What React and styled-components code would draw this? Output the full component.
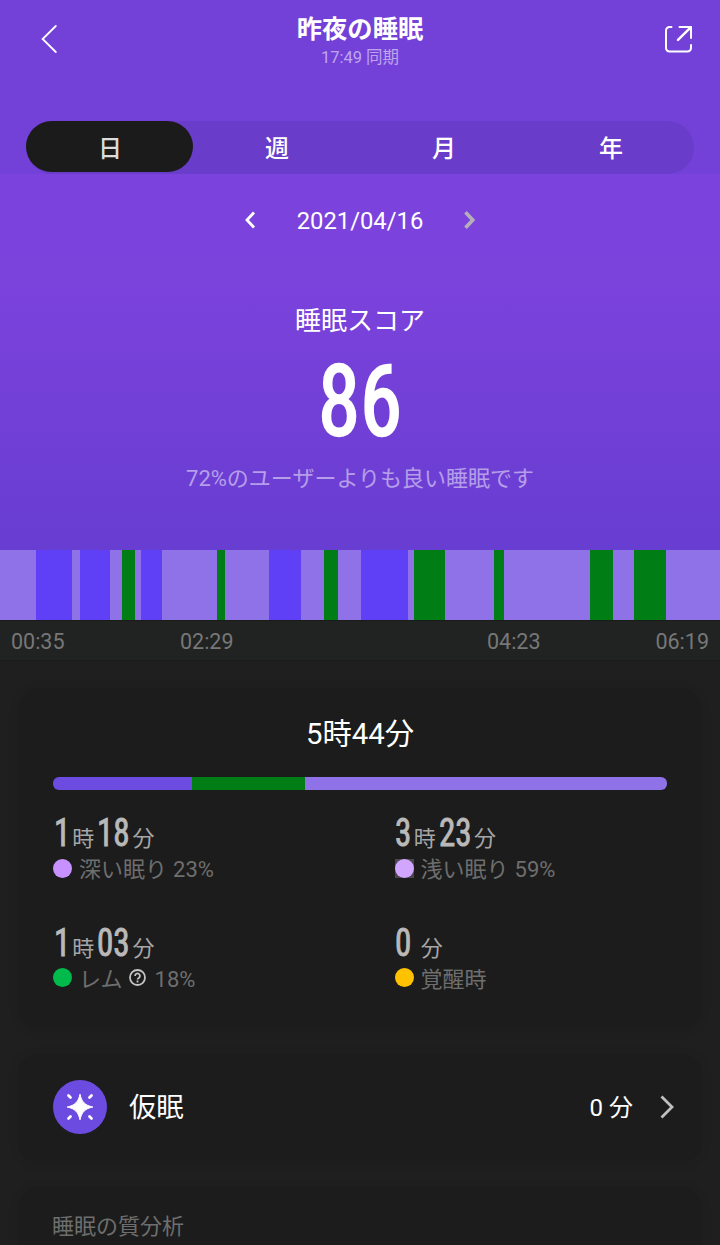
import React, { Component } from 'react'
import styled, { createGlobalStyle } from 'styled-components'

const GlobalStyle = createGlobalStyle`
    * {
        box-sizing: border-box;
    }

    body {
        margin: 0;
        background: #1f1f1f;
        font-family: Roboto, 'Noto Sans CJK JP', sans-serif;
        color: #fff;
    }
`

const Screen = styled.main`
    display: flex;
    flex-direction: column;
    width: 720px;
    height: 1245px;
    overflow: hidden;
    background: #1f1f1f;
`

const Top = styled.header`
    flex: none;
    height: 174px;
    padding: 0 26px;
    background: #7341d8;
`

const TitleBar = styled.div`
    display: grid;
    grid-template-columns: 48px 1fr 48px;
    height: 121px;
    padding: 11px 0 0;
`

const IconButton = styled.button`
    display: flex;
    align-items: center;
    justify-content: ${props => props.$end ? 'flex-end' : 'center'};
    width: 48px;
    height: 56px;
    padding: 0;
    border: 0;
    background: none;
    color: #fff;
`

const Heading = styled.div`
    text-align: center;
`

const Title = styled.h1`
    margin: 0;
    padding-top: 2px;
    font-size: 25.3px;
    font-weight: 700;
    line-height: 34px;
`

const Synced = styled.p`
    margin: 0;
    font-size: 16.5px;
    line-height: 22px;
    color: rgba(255, 255, 255, 0.55);
`

const Tabs = styled.nav`
    display: flex;
    height: 53px;
    border-radius: 27px;
    background: #6a3cca;
`

const Tab = styled.button`
    flex: 1;
    height: 51px;
    padding: 2px 0 0 1px;
    border: 0;
    border-radius: 26px;
    font: 500 24px/49px Roboto, 'Noto Sans CJK JP', sans-serif;
    color: ${props => props.$active ? '#dcdcdc' : '#fff'};
    background: ${props => props.$active ? '#1b1b1b' : 'none'};

    span {
        display: block;
        padding-top: 2px;
    }
`

const Score = styled.section`
    display: flex;
    flex: none;
    flex-direction: column;
    align-items: center;
    height: 376px;
    padding-top: 30px;
    background: linear-gradient(#7c42dd 0, #7b42dc 30%, #683dd1 100%);
`

const DatePicker = styled.div`
    display: flex;
    align-items: center;
    gap: 38.5px;
    height: 34px;
    font-size: 23.8px;
    line-height: 34px;

    svg {
        margin-top: -2px;
    }
`

const ScoreLabel = styled.h2`
    margin: 63px 0 0;
    font-size: 26px;
    font-weight: 400;
    line-height: 40px;
`

// narrow numerals, the negative margin takes back the width lost by scaling
const Digits = styled.span`
    display: inline-block;
    font-family: 'Roboto Condensed', Roboto, sans-serif;
    font-stretch: 75%;
    -webkit-text-stroke: 0.024em currentColor;
    transform: scaleX(0.87);
    transform-origin: left;
    margin-right: ${props => props.$count * -0.064}em;
`

const ScoreValue = styled.div`
    margin-top: 11px;
    font-size: 98px;
    line-height: 100px;
`

const ScoreNote = styled.p`
    margin: 11px 0 0;
    font-size: 22px;
    line-height: 32px;
    color: rgba(255, 255, 255, 0.5);
`

const Timeline = styled.div`
    display: flex;
    flex: none;
    height: 70px;
`

const colors = {
    light: '#8f72e8',
    deep: '#5f40f7',
    rem: '#007d14',
    total: '#6c4be0'
}

const Segment = styled.div`
    flex: ${props => props.$size} 0 0;
    background: ${props => colors[props.$kind]};
`

const Axis = styled.div`
    display: grid;
    grid-template-columns: 169px 307px 1fr auto;
    flex: none;
    height: 41px;
    padding: 0 11px;
    border-top: 1px solid #1a1d17;
    border-bottom: 1px solid #1a1a1a;
    background: #212322;
    font-size: 21.5px;
    line-height: 41px;
    color: #777;
`

const Cards = styled.div`
    display: flex;
    flex-direction: column;
    gap: 26px;
    padding: 27px 19px 0;
`

const Card = styled.section`
    flex: none;
    padding: 0 34px;
    border-radius: 20px;
    background: #1c1c1c;
    box-shadow: 0 2px 12px rgba(0, 0, 0, 0.1);
`

const Summary = styled(Card)`
    height: 340px;
    padding-top: 25px;
`

const Total = styled.h3`
    margin: 0;
    font-size: 29.3px;
    font-weight: 400;
    line-height: 42px;
    text-align: center;
`

const Ratio = styled.div`
    display: flex;
    height: 13px;
    margin-top: 22px;
    border-radius: 6px;
    overflow: hidden;
`

const Stages = styled.div`
    display: grid;
    grid-template-columns: 341.5px 1fr;
    grid-auto-rows: 109.5px;
    padding-top: 21px;
`

const Duration = styled.div`
    height: 44px;
    padding-left: 0.5px;
    font-size: 38px;
    line-height: 44px;
    white-space: nowrap;
    color: #b9b9b9;
`

const Unit = styled.span`
    margin: 0 3px 0 ${props => props.$wide ? 9.5 : 2.5}px;
    font-size: 22px;
    color: #a6a6a6;
`

const StageName = styled.div`
    display: flex;
    align-items: center;
    height: 30px;
    font-size: 22px;
    line-height: 30px;
    color: #6e6e6e;
`

const Percent = styled.span`
    margin-left: ${props => props.$help ? 0 : 6}px;
`

const Dot = styled.span`
    width: 19px;
    height: 19px;
    margin: -4px 7px 0 0;
    background: ${props => props.$boxed ? '#4b454f' : 'none'};

    &::before {
        content: '';
        display: block;
        height: 19px;
        border-radius: 50%;
        background: ${props => props.$color};
    }
`

const HelpIcon = styled.svg`
    margin: -4px 9px 0 6px;
`

const NapCard = styled(Card)`
    display: flex;
    align-items: center;
    height: 107px;
    padding-right: 26px;
    padding-bottom: 2px;
`

const NapIcon = styled.svg`
    margin-right: 22px;
`

const NapName = styled.span`
    flex: 1;
    padding-top: 2px;
    font-size: 27.3px;
    line-height: 40px;
`

const NapValue = styled.span`
    margin-right: 26px;
    padding-bottom: 3px;
    font-size: 24px;
`

const Analysis = styled(Card)`
    height: 200px;
    padding: 24px 33px 0;
    font-size: 22px;
    line-height: 32px;
    color: #6e6e6e;
`

const timeline = [
    ['light', 36], ['deep', 35.5], ['light', 8.5], ['deep', 29.5], ['light', 12.5],
    ['rem', 12.5], ['light', 6.5], ['deep', 21], ['light', 55], ['rem', 8],
    ['light', 44], ['deep', 31.5], ['light', 23], ['rem', 14.5], ['light', 23.3],
    ['deep', 46.2], ['light', 6.2], ['rem', 31.3], ['light', 48.7], ['rem', 10.3],
    ['light', 86], ['rem', 23], ['light', 21], ['rem', 31.5], ['light', 54.5]
]

const ratio = [['total', 139], ['rem', 112.5], ['light', 362.5]]

const stages = [
    { name: '深い眠り', hours: '1', minutes: '18', percent: '23%', color: '#c792ff' },
    { name: '浅い眠り', hours: '3', minutes: '23', percent: '59%', color: '#d2a6ff', boxed: true },
    { name: 'レム', hours: '1', minutes: '03', percent: '18%', color: '#00ba4b', help: true },
    { name: '覚醒時', minutes: '0', color: '#ffc200' }
]

class App extends Component {

    state = { tab: '日' }

    renderSegments = (list) => list.map(([kind, size], i) => (
        <Segment key={i} $kind={kind} $size={size} />
    ))

    renderStage = (item) => (
        <div key={item.name}>
            <Duration>
                {item.hours && <Digits $count={1}>{item.hours}</Digits>}
                {item.hours && <Unit>時</Unit>}
                <Digits $count={item.minutes.length}>{item.minutes}</Digits>
                <Unit $wide={!item.hours}>分</Unit>
            </Duration>
            <StageName>
                <Dot $color={item.color} $boxed={item.boxed} />
                <span>{item.name}</span>
                {item.help && (
                    <HelpIcon width='17' height='17' viewBox='0 0 17 17' fill='none' stroke='#c4c4c4' strokeWidth='1.8'>
                        <circle cx='8.5' cy='8.5' r='7.5' />
                        <path d='M6.1 6.9a2.4 2.4 0 1 1 3.7 2c-.9.6-1.3.9-1.3 1.6M8.5 11.5v1.9' />
                    </HelpIcon>
                )}
                {item.percent && <Percent $help={item.help}>{item.percent}</Percent>}
            </StageName>
        </div>
    )

    render() {
        const { tab } = this.state
        return (
            <Screen>
                <GlobalStyle />
                <Top>
                    <TitleBar>
                        <IconButton aria-label='戻る'>
                            <svg width='18' height='30' viewBox='0 0 18 30' fill='none' stroke='currentColor' strokeWidth='1.8' strokeLinecap='round'>
                                <path d='M14.8 2L1.6 15l13.2 13' />
                            </svg>
                        </IconButton>
                        <Heading>
                            <Title>昨夜の睡眠</Title>
                            <Synced>17:49 同期</Synced>
                        </Heading>
                        <IconButton $end aria-label='共有'>
                            <svg width='30' height='30' viewBox='0 0 30 30' fill='none' stroke='currentColor' strokeWidth='2' strokeLinecap='round'>
                                <path d='M7.5 3H5.5A3.500 3.500 0 0 0 2 6.500v17.500a3.500 3.500 0 0 0 3.500 3.500h18a3.500 3.500 0 0 0 3.500-3.500v-3' />
                                <path d='M15.5 3H27v11' />
                                <path d='M26.2 3.8L14 15.8' strokeWidth='2.5' />
                            </svg>
                        </IconButton>
                    </TitleBar>
                    <Tabs>
                        {['日', '週', '月', '年'].map(name => (
                            <Tab key={name} $active={name === tab} onClick={() => this.setState({ tab: name })}>
                                <span>{name}</span>
                            </Tab>
                        ))}
                    </Tabs>
                </Top>
                <Score>
                    <DatePicker>
                        <svg width='14' height='20' viewBox='0 0 14 20' fill='none' stroke='#fff' strokeWidth='2.8'>
                            <path d='M10 2.5L3 10l7 7.5' />
                        </svg>
                        <span>2021/04/16</span>
                        <svg width='14' height='20' viewBox='0 0 14 20' fill='none' stroke='#b5b0b8' strokeWidth='3.6'>
                            <path d='M3.5 2.2l7.3 7.800-7.300 7.800' />
                        </svg>
                    </DatePicker>
                    <ScoreLabel>睡眠スコア</ScoreLabel>
                    <ScoreValue><Digits $count={2}>86</Digits></ScoreValue>
                    <ScoreNote>72%のユーザーよりも良い睡眠です</ScoreNote>
                </Score>
                <Timeline>{this.renderSegments(timeline)}</Timeline>
                <Axis>
                    <span>00:35</span>
                    <span>02:29</span>
                    <span>04:23</span>
                    <span>06:19</span>
                </Axis>
                <Cards>
                    <Summary>
                        <Total>5時44分</Total>
                        <Ratio>{this.renderSegments(ratio)}</Ratio>
                        <Stages>{stages.map(this.renderStage)}</Stages>
                    </Summary>
                    <NapCard>
                        <NapIcon width='54' height='54' viewBox='0 0 54 54'>
                            <circle cx='27' cy='27' r='27' fill='#6c4be0' />
                            <path d='M27 14.2c1.700 7.800 5 11.100 12.800 12.800-7.800 1.700-11.100 5-12.800 12.800-1.700-7.800-5-11.100-12.800-12.800 7.800-1.700 11.100-5 12.800-12.800z' fill='#fff' stroke='#fff' strokeLinejoin='round' />
                            <path d='M15.5 15.5l2 2M38.5 15.5l-2 2M15.5 38.5l2-2M38.5 38.5l-2-2' stroke='#fff' strokeWidth='2.8' strokeLinecap='round' />
                        </NapIcon>
                        <NapName>仮眠</NapName>
                        <NapValue>0 分</NapValue>
                        <svg width='16' height='26' viewBox='0 0 16 26' fill='none' stroke='#c0c0c0' strokeWidth='2.8'>
                            <path d='M2.5 2.5L13 13 2.5 23.5' />
                        </svg>
                    </NapCard>
                    <Analysis>睡眠の質分析</Analysis>
                </Cards>
            </Screen>
        )
    }
}

export default App
